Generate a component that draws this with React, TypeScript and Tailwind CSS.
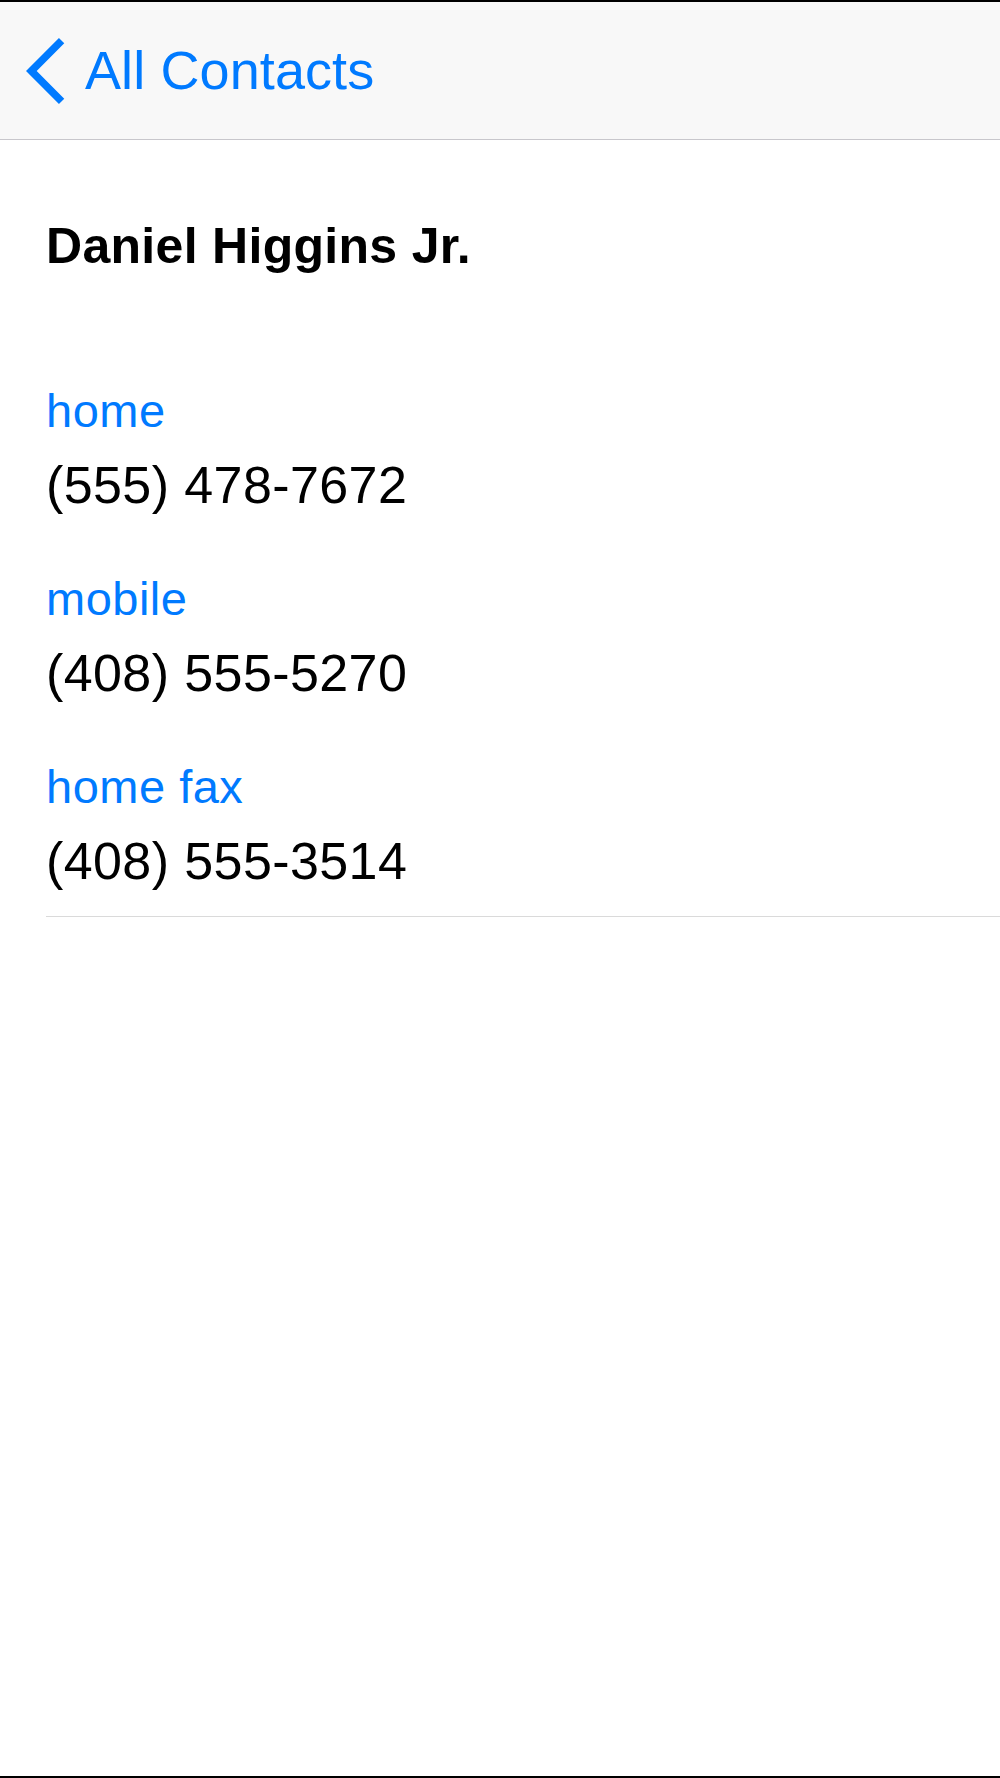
import React from "react";

const rows = [
  { label: "home", phone: "(555) 478-7672" },
  { label: "mobile", phone: "(408) 555-5270" },
  { label: "home fax", phone: "(408) 555-3514" },
];

export default function App() {
  return (
    <div className="w-full h-[1778px] bg-white border-t-2 border-b-2 border-black flex flex-col font-['Liberation_Sans',Arial,sans-serif] antialiased">
      <header className="h-[138px] shrink-0 bg-[#f8f8f8] border-b border-[#c8c7cc] flex items-start">
        <svg width="70" height="137" viewBox="0 0 70 137" className="shrink-0">
          <polyline
            points="61.6,38.6 31.3,69 61.6,99.4"
            fill="none"
            stroke="#007aff"
            strokeWidth="7.5"
            strokeLinecap="butt"
            strokeLinejoin="miter"
          />
        </svg>
        <span className="ml-[15px] text-[54px] leading-[137px] tracking-[0.1px] text-[#007aff] whitespace-nowrap">
          All Contacts
        </span>
      </header>
      <main className="flex flex-col pt-[81px] pl-[46px]">
        <h1 className="text-[50px] leading-none font-bold tracking-[0.3px] text-black whitespace-nowrap">
          Daniel Higgins Jr.
        </h1>
        <div className="mt-[116px] flex flex-col">
          {rows.map((r, i) => (
            <div key={r.label} className={i > 0 ? "mt-[64px] flex flex-col" : "flex flex-col"}>
              <div className="text-[47px] leading-none tracking-[0.5px] text-[#007aff] whitespace-nowrap">{r.label}</div>
              <div className="mt-[25px] text-[52px] leading-none tracking-[0.4px] text-black whitespace-nowrap">{r.phone}</div>
            </div>
          ))}
        </div>
        <div className="mt-[29px] h-px bg-[#dadada]" />
      </main>
    </div>
  );
}
